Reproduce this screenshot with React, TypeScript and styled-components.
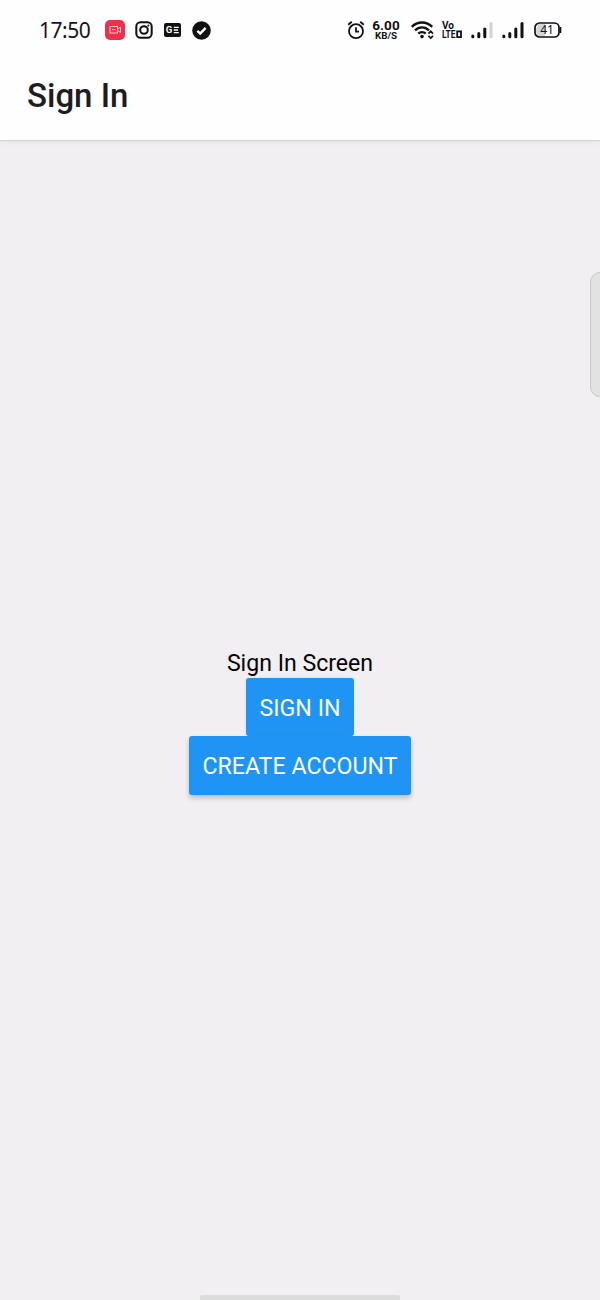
import React from "react";
import styled, { createGlobalStyle } from "styled-components";

const GlobalStyle = createGlobalStyle`
  * { box-sizing: border-box; }
  body { margin: 0; font-family: Roboto, "Liberation Sans", sans-serif; }
`;

const Phone = styled.div`
  position: relative;
  display: flex;
  flex-direction: column;
  height: 1300px;
  overflow: hidden;
  background: #f1eff2;
`;

const Top = styled.header`
  height: 140px;
  background: #fefdff;
  box-shadow: 0 1px 1px #d5d4d6, 0 2px 5px rgba(0, 0, 0, 0.05);
`;

const StatusBar = styled.div`
  display: flex;
  justify-content: space-between;
  height: 60px;
  padding: 0 38px 0 39px;
`;

const StatusGroup = styled.div`
  display: flex;
  align-items: center;
`;

const Clock = styled.span`
  width: 66px;
  font: 400 21px/24px "Noto Sans", sans-serif;
  letter-spacing: -0.45px;
  color: #151515;
  white-space: nowrap;
`;

const Icon = styled.svg<{ $gap?: number }>`
  flex: none;
  display: block;
  margin-right: ${(p) => p.$gap ?? 0}px;
`;

const Stack = styled.div<{ $width: number; $gap: number }>`
  display: flex;
  flex-direction: column;
  align-items: center;
  width: ${(p) => p.$width}px;
  margin-right: ${(p) => p.$gap}px;
  color: #111;
  white-space: nowrap;
`;

const Speed = styled.span`
  font-size: 13.5px;
  font-weight: 700;
  line-height: 11px;
  letter-spacing: 0.1px;
`;

const Unit = styled.span`
  font-size: 9.8px;
  font-weight: 700;
  line-height: 10px;
`;

const Title = styled.h1`
  margin: 0;
  padding: 16px 27px 0;
  font-size: 33px;
  font-weight: 500;
  line-height: 40px;
  color: #1d1c1f;
`;

const Content = styled.main`
  flex: 1;
  display: flex;
  flex-direction: column;
  align-items: center;
  padding-top: 509px;
`;

const Label = styled.div`
  height: 29px;
  font-size: 23.1px;
  line-height: 30px;
  color: #050505;
`;

const Button = styled.button<{ $width: number; $height: number; $raised?: boolean }>`
  width: ${(p) => p.$width}px;
  height: ${(p) => p.$height}px;
  padding: ${(p) => (p.$raised ? 1 : 2)}px 0 0;
  border: 0;
  border-radius: 3px;
  background: #2094f3;
  box-shadow: ${(p) => (p.$raised ? "0 3px 5px rgba(0, 0, 0, 0.22)" : "0 0 3px rgba(0, 0, 0, 0.1)")};
  font: 400 23.2px/30px Roboto, sans-serif;
  color: #fafcff;
  white-space: nowrap;
`;

const EdgeHandle = styled.div`
  position: absolute;
  top: 272px;
  right: -12px;
  width: 22px;
  height: 125px;
  border: 1px solid #c8c7c9;
  border-radius: 10px;
  background: #e3e2e3;
`;

const HomeBar = styled.div`
  position: absolute;
  bottom: 0;
  left: 200px;
  width: 200px;
  height: 5px;
  border-radius: 2px 2px 0 0;
  background: #dddcdd;
`;

const INK = "#111";

const Signal = ({ weak, gap }: { weak?: boolean; gap: number }) => (
  <Icon $gap={gap} width="22" height="20" viewBox="0 0 22 20" strokeWidth="3" strokeLinecap="round">
    <path d="M1.8 16v.8M7.8 13.5v3.3M13.8 9v7.8" stroke={INK} />
    <path d="M20 3.5v13.3" stroke={weak ? "#d2d1d3" : INK} />
  </Icon>
);

export default function App() {
  return (
    <>
      <GlobalStyle />
      <Phone>
        <Top>
          <StatusBar>
            <StatusGroup>
              <Clock>17:50</Clock>
              <Icon $gap={10} width="20" height="20" viewBox="0 0 20 20">
                <rect width="20" height="20" rx="5" fill="#f0304b" />
                <g fill="none" stroke="#ffc4cb" strokeWidth="1">
                  <rect x="5" y="6.5" width="7.5" height="6.5" />
                  <path d="M12.5 9l3-1.8v5.2l-3-1.8M7 9.7h3.5" />
                </g>
              </Icon>
              <Icon $gap={11} width="18" height="18" viewBox="0 0 18 18" fill="none" stroke={INK} strokeWidth="2">
                <rect x="1.3" y="1.3" width="15.4" height="15.4" rx="4.2" />
                <circle cx="9" cy="9" r="3.8" />
                <circle cx="13.4" cy="4.6" r="1" fill={INK} stroke="none" />
              </Icon>
              <Icon $gap={11} width="17" height="14" viewBox="0 0 17 14">
                <rect width="17" height="14" rx="2" fill={INK} />
                <text x="1.8" y="10.3" fontSize="9.5" fontWeight="700" fill="#fff">G</text>
                <path d="M9.8 4.3h5M9.8 7h4.2M9.8 9.7h5" fill="none" stroke="#fff" strokeWidth="1.3" />
              </Icon>
              <Icon width="19" height="19" viewBox="0 0 19 19">
                <circle cx="9.5" cy="9.5" r="9.3" fill={INK} />
                <path d="M5.4 9.8l2.8 2.7 5.4-5.6" fill="none" stroke="#fff" strokeWidth="2.4" />
              </Icon>
            </StatusGroup>
            <StatusGroup>
              <Icon $gap={7} width="18" height="20" viewBox="0 0 18 20" fill="none" stroke={INK} strokeWidth="1.8">
                <circle cx="9" cy="11.2" r="7" />
                <path d="M9 7.3v4.4h3M1.2 4.7l3.6-3M16.8 4.7l-3.6-3" />
              </Icon>
              <Stack $width={28} $gap={11}>
                <Speed>6.00</Speed>
                <Unit>KB/S</Unit>
              </Stack>
              <Icon $gap={8} width="23" height="20" viewBox="0 0 23 20" fill="none" stroke={INK}>
                <path d="M.8 6.8C6.5 1 15.5 1 21.2 6.8M4 10.4c4-4 10-4 14 0M7.3 13.7c2-2.1 5.4-2.1 7.4 0" strokeWidth="2.4" />
                <circle cx="11" cy="16.6" r="1.8" fill={INK} stroke="none" />
                <path d="M17.4 13.6l2.3-2.3 2.3 2.3M17.4 15.8l2.3 2.3 2.3-2.3" strokeWidth="1.7" />
              </Icon>
              <Icon $gap={9} width="20" height="18" viewBox="0 0 20 18" fill={INK} fontWeight="700">
                <text x="0" y="8.2" fontSize="10.5" textLength="12" lengthAdjust="spacingAndGlyphs">Vo</text>
                <text x="0" y="17" fontSize="10.5" textLength="13.5" lengthAdjust="spacingAndGlyphs">LTE</text>
                <rect x="15.2" y="10.4" width="3.8" height="5.7" fill="none" stroke={INK} strokeWidth="1.8" />
              </Icon>
              <Signal weak gap={9} />
              <Signal gap={10} />
              <Icon width="28" height="16" viewBox="0 0 28 16">
                <path d="M4 2h7v12H5Q2 13 2 8z" fill="#d5d4d6" />
                <rect x="1" y="1" width="24" height="14" rx="4.5" fill="none" stroke={INK} strokeWidth="1.7" />
                <path d="M26.5 5v6" stroke={INK} strokeWidth="1.6" />
                <text x="13" y="12.3" textAnchor="middle" fontFamily="Noto Sans, sans-serif" fontSize="12" fill={INK}>
                  41
                </text>
              </Icon>
            </StatusGroup>
          </StatusBar>
          <Title>Sign In</Title>
        </Top>
        <Content>
          <Label>Sign In Screen</Label>
          <Button $width={108} $height={58}>SIGN IN</Button>
          <Button $width={222} $height={58.5} $raised>CREATE ACCOUNT</Button>
        </Content>
        <EdgeHandle />
        <HomeBar />
      </Phone>
    </>
  );
}
